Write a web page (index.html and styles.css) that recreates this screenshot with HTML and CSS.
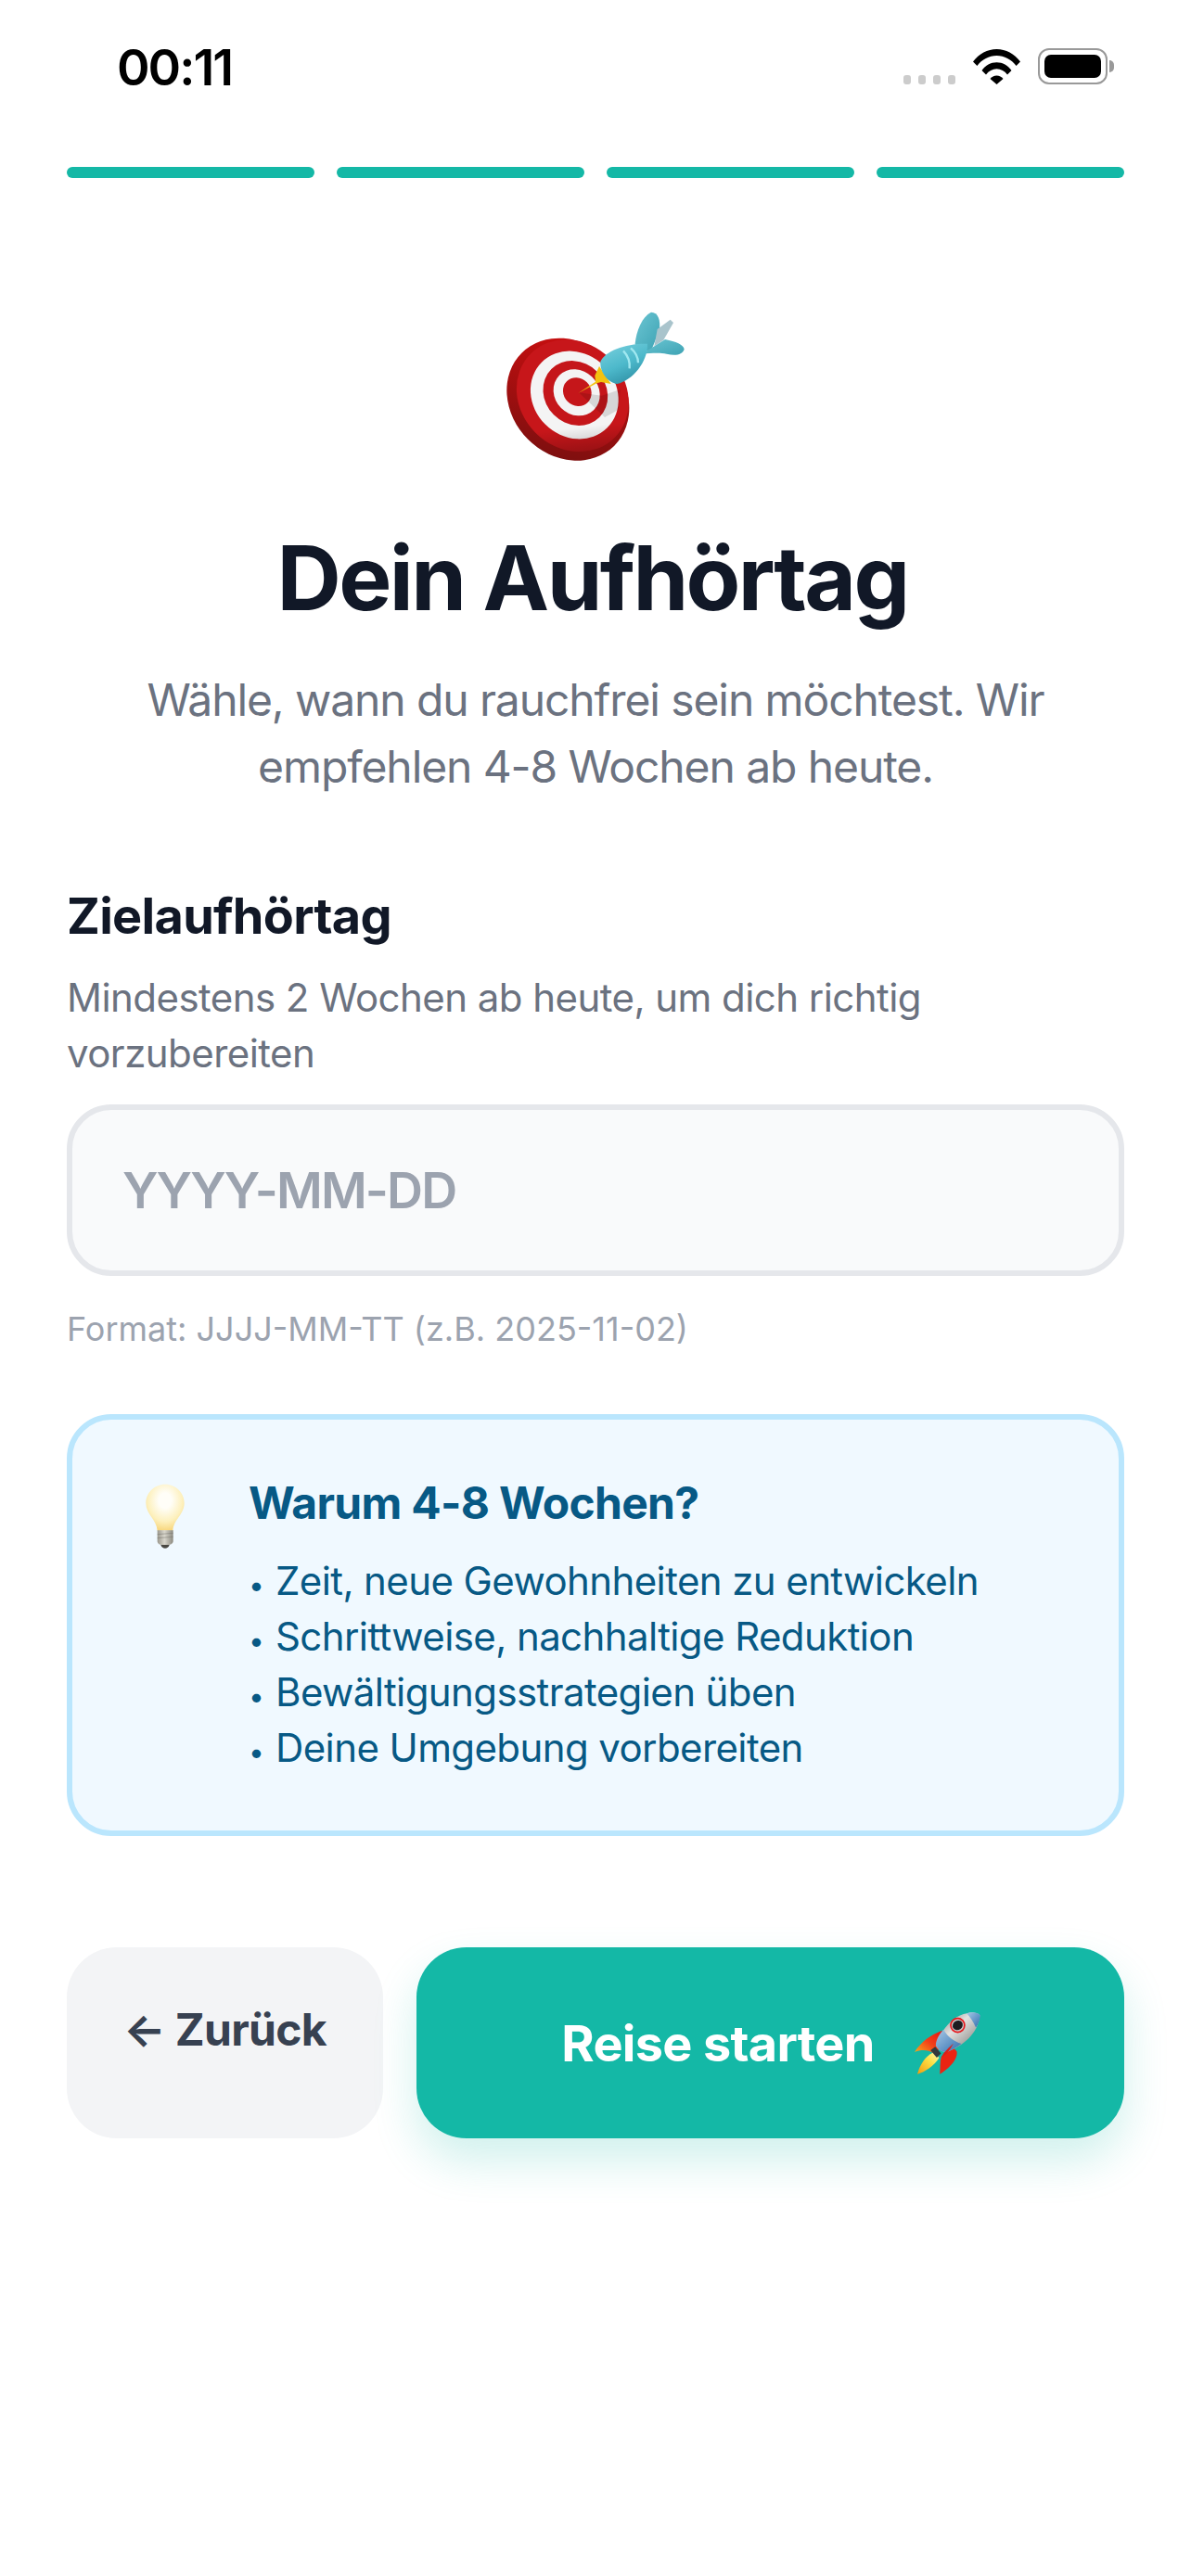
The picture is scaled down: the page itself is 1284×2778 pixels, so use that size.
FILE: index.html
```html
<!DOCTYPE html>
<html lang="de">
<head>
    <meta charset="UTF-8">
    <meta name="viewport" content="width=device-width, initial-scale=1.0">
    <title>Dein Aufhörtag</title>
    <link rel="stylesheet" href="styles.css">
</head>
<body>
    <!-- Statusleiste -->
    <div class="status-bar">
        <span class="time">00:11</span>
        <div class="status-icons">
            <div class="signal"><i></i><i></i><i></i><i></i></div>
            <svg class="wifi" viewBox="0 0 51 38" width="51" height="38">
                <path d="M0 13.5C6.5 5 15.5 0 25.5 0S44.5 5 51 13.5L46.6 18C41.2 11 33.8 7 25.5 7S9.8 11 4.4 18Z"/>
                <path d="M9.5 23C13.5 17.5 19 14.2 25.5 14.2S37.500 17.5 41.500 23L37 27.500C34 23.600 30 21.300 25.500 21.300S17 23.600 14 27.500Z"/>
                <path d="M18.500 32C20.200 29.800 22.700 28.400 25.500 28.400S30.800 29.800 32.500 32L25.500 38Z"/>
            </svg>
            <div class="battery"><div class="battery-level"></div></div>
        </div>
    </div>

    <!-- Fortschritt -->
    <div class="progress">
        <div class="progress-step"></div>
        <div class="progress-step"></div>
        <div class="progress-step"></div>
        <div class="progress-step"></div>
    </div>

    <main class="content">
        <svg class="target-icon" viewBox="0 0 840 600" width="280" height="200">
            <defs>
                <linearGradient id="finGrad" x1="0" y1="0" x2="1" y2="1">
                    <stop offset="0" stop-color="#6cc6d3"/>
                    <stop offset="1" stop-color="#3ea3b4"/>
                </linearGradient>
                <linearGradient id="bodyGrad" x1="0.3" y1="0.1" x2="0.7" y2="0.9">
                    <stop offset="0" stop-color="#6cc9d8"/>
                    <stop offset="0.5" stop-color="#4db9cb"/>
                    <stop offset="1" stop-color="#3395aa"/>
                </linearGradient>
                <linearGradient id="rimGrad" x1="0" y1="0" x2="0.7" y2="1">
                    <stop offset="0" stop-color="#d40f10"/>
                    <stop offset="1" stop-color="#7d0f0f"/>
                </linearGradient>
                <linearGradient id="shadeGrad" x1="0.3" y1="0.2" x2="1" y2="0.7">
                    <stop offset="0.72" stop-color="#000" stop-opacity="0"/>
                    <stop offset="1" stop-color="#000" stop-opacity="0.25"/>
                </linearGradient>
            </defs>
            <ellipse cx="331" cy="362" rx="212" ry="183" transform="rotate(45 331 362)" fill="url(#rimGrad)"/>
            <ellipse cx="346" cy="350" rx="192" ry="170" transform="rotate(45 346 350)" fill="#c7161a"/>
            <ellipse cx="352" cy="348" rx="150" ry="134" transform="rotate(45 352 348)" fill="#f4f4f4"/>
            <ellipse cx="355" cy="342" rx="110" ry="99" transform="rotate(45 355 342)" fill="#c5161a"/>
            <ellipse cx="359" cy="340" rx="79" ry="71" transform="rotate(45 359 340)" fill="#f4f4f4"/>
            <ellipse cx="361" cy="338" rx="48" ry="44" transform="rotate(45 361 338)" fill="#c5161a"/>
            <path d="M366 340L440 350L500 330L495 395L450 420Z" fill="#000" opacity="0.12"/>
            <ellipse cx="346" cy="350" rx="192" ry="170" transform="rotate(45 346 350)" fill="url(#shadeGrad)"/>
            <path d="M364 342L420 305L418 285L432 255L470 312L438 306L424 310Z" fill="#f3c20f"/>
            <path d="M548 182C552 140 570 95 600 80C622 80 632 105 626 140L600 205L560 205Z" fill="url(#finGrad)"/>
            <path d="M620 135L662 104L672 114L640 170L610 190Z" fill="#a9c4cc"/>
            <path d="M570 215L645 168C680 175 705 185 707 200C700 218 680 222 650 215C630 210 600 212 570 215Z" fill="url(#finGrad)"/>
            <path d="M436 240C450 205 520 180 588 182C590 240 540 300 490 312C460 308 434 275 436 240Z" fill="url(#bodyGrad)"/>
            <path d="M510 205C526 222 532 242 530 262M534 196C550 210 558 226 558 244" fill="none" stroke="#a0e8f0" stroke-width="7"/>
        </svg>

        <h1 class="title">Dein Aufhörtag</h1>
        <p class="subtitle">Wähle, wann du rauchfrei sein möchtest. Wir empfehlen 4-8 Wochen ab heute.</p>

        <label class="field-label" for="quitDate">Zielaufhörtag</label>
        <p class="field-help">Mindestens 2 Wochen ab heute, um dich richtig vorzubereiten</p>
        <input class="date-input" id="quitDate" type="text" placeholder="YYYY-MM-DD">
        <p class="field-format">Format: JJJJ-MM-TT (z.B. 2025-11-02)</p>

        <div class="info-box">
            <svg class="bulb-icon" viewBox="84 84 180 222" width="60" height="74">
                <defs>
                    <radialGradient id="glassGrad" cx="0.5" cy="0.35" r="0.65">
                        <stop offset="0.25" stop-color="#fffef8"/>
                        <stop offset="0.7" stop-color="#fdf0bc"/>
                        <stop offset="1" stop-color="#f8d77e"/>
                    </radialGradient>
                    <linearGradient id="baseGrad" x1="0" y1="0" x2="1" y2="0">
                        <stop offset="0" stop-color="#9a978c"/>
                        <stop offset="0.45" stop-color="#d8d6cc"/>
                        <stop offset="1" stop-color="#8c8a80"/>
                    </linearGradient>
                </defs>
                <path d="M174 92C139 92 112 120 112 153C112 190 146 205 149 242H199C202 205 236 190 236 153C236 120 209 92 174 92Z" fill="url(#glassGrad)"/>
                <path d="M149 241H200V276C200 284 190 288 186 288H162C157 288 149 284 149 276Z" fill="url(#baseGrad)"/>
                <path d="M149 254L200 250M149 266L200 262" stroke="#77756c" stroke-width="2.500" opacity="0.6"/>
                <path d="M160 288H188C186 296 180 299 174 299S162 296 160 288Z" fill="#4a4944"/>
            </svg>
            <div class="info-text">
                <h2 class="info-title">Warum 4-8 Wochen?</h2>
                <ul class="info-list">
                    <li>Zeit, neue Gewohnheiten zu entwickeln</li>
                    <li>Schrittweise, nachhaltige Reduktion</li>
                    <li>Bewältigungsstrategien üben</li>
                    <li>Deine Umgebung vorbereiten</li>
                </ul>
            </div>
        </div>

        <div class="actions">
            <button class="btn-back">← Zurück</button>
            <button class="btn-start">
                <span>Reise starten</span>
                <svg class="rocket-icon" viewBox="125 85 220 210" width="73" height="70">
                    <defs>
                        <linearGradient id="hullGrad" x1="0.1" y1="0.1" x2="0.9" y2="0.9">
                            <stop offset="0" stop-color="#8c8c8c"/>
                            <stop offset="0.4" stop-color="#e2e2e0"/>
                            <stop offset="0.75" stop-color="#a9a9a6"/>
                            <stop offset="1" stop-color="#6f7375"/>
                        </linearGradient>
                        <linearGradient id="noseGrad" x1="0" y1="0" x2="1" y2="1">
                            <stop offset="0" stop-color="#a9c9e6"/>
                            <stop offset="1" stop-color="#2f6fb0"/>
                        </linearGradient>
                        <linearGradient id="finRed" x1="0" y1="1" x2="1" y2="0">
                            <stop offset="0" stop-color="#f7b01c"/>
                            <stop offset="0.5" stop-color="#f2401a"/>
                            <stop offset="1" stop-color="#e8150f"/>
                        </linearGradient>
                        <linearGradient id="flameGrad" x1="0" y1="1" x2="1" y2="0">
                            <stop offset="0" stop-color="#f29a0c"/>
                            <stop offset="0.6" stop-color="#fde047"/>
                            <stop offset="1" stop-color="#fff7b0"/>
                        </linearGradient>
                    </defs>
                    <path d="M218 150C180 165 150 185 128 220C150 212 170 212 190 224L215 205Z" fill="url(#finRed)"/>
                    <path d="M265 218C270 240 245 270 210 292C212 270 210 250 215 235L245 195Z" fill="#ea2412"/>
                    <path d="M188 222C162 235 145 262 137 292C160 285 192 265 208 238Z" fill="url(#flameGrad)"/>
                    <path d="M180 214L195 203L214 225L200 238Z" fill="#33393d"/>
                    <path d="M298 94C255 100 215 145 197 198C205 212 215 220 232 220C285 200 335 160 340 100C330 90 312 90 298 94Z" fill="url(#hullGrad)"/>
                    <path d="M297 94C315 88 335 92 341 100C341 115 335 130 327 140C318 120 308 105 297 94Z" fill="url(#noseGrad)"/>
                    <path d="M222 147C205 165 197 185 197 198C205 212 215 220 232 220C248 214 265 205 280 193C255 185 235 170 222 147Z" fill="url(#noseGrad)"/>
                    <circle cx="268" cy="133" r="25" fill="#e8161a"/>
                    <circle cx="268" cy="133" r="20" fill="#c8c8c8"/>
                    <ellipse cx="268" cy="133" rx="17" ry="15" transform="rotate(-35 268 133)" fill="#1c1c20"/>
                    <path d="M222 225C232 212 245 200 254 192C248 205 235 225 215 238Z" fill="#d9201a"/>
                </svg>
            </button>
        </div>
    </main>
</body>
</html>
```

FILE: styles.css
```css
* {
    box-sizing: border-box;
}
body {
    font-family: Inter, "Liberation Sans", sans-serif;
    margin: 0;
    padding: 0;
    background-color: #fff;
    color: #111827;
    min-height: 2778px;
}
.status-bar {
    display: flex;
    justify-content: space-between;
    height: 180px;
    padding: 44px 90px 0 126px;
}
.time {
    font-size: 54px;
    font-weight: 600;
    line-height: 57px;
    letter-spacing: -2px;
    color: #000;
}
.status-icons {
    display: flex;
    align-items: flex-end;
    gap: 19px;
    height: 38px;
    margin-top: 9px;
}
.signal {
    display: flex;
    gap: 8px;
}
.signal i {
    width: 8px;
    height: 10px;
    border-radius: 3px;
    background-color: #ccc;
}
.wifi {
    fill: #000;
    display: block;
}
.battery {
    position: relative;
    width: 75px;
    height: 39px;
    padding: 5px;
    border: 2px solid #999;
    border-radius: 12px;
}
.battery::after {
    content: "";
    position: absolute;
    right: -9px;
    top: 11px;
    width: 5px;
    height: 13px;
    border-radius: 0 5px 5px 0;
    background-color: #999;
}
.battery-level {
    height: 100%;
    border-radius: 7px;
    background-color: #000;
}
.progress {
    display: flex;
    gap: 24px;
    padding: 0 72px;
}
.progress-step {
    flex: 1;
    height: 12px;
    border-radius: 6px;
    background-color: #14b8a6;
}
.content {
    display: flex;
    flex-direction: column;
    padding: 118px 72px 0;
}
.target-icon {
    display: block;
    align-self: center;
}
.title {
    margin: 55px 7px 0 0;
    font-size: 96px;
    font-weight: 700;
    line-height: 116px;
    letter-spacing: -2.6px;
    text-align: center;
}
.subtitle {
    margin: 38px 60px 0;
    font-size: 48px;
    line-height: 72px;
    letter-spacing: -1.1px;
    text-align: center;
    color: #6b7280;
}
.field-label {
    margin-top: 92px;
    font-size: 54px;
    font-weight: 700;
    line-height: 66px;
    letter-spacing: -0.7px;
}
.field-help {
    margin: 25px 0 0;
    font-size: 42px;
    line-height: 60px;
    letter-spacing: -0.55px;
    color: #6b7280;
}
.date-input {
    width: 100%;
    height: 185px;
    margin-top: 25px;
    padding: 0 54px;
    font-family: inherit;
    font-size: 54px;
    font-weight: 600;
    letter-spacing: -1.9px;
    color: #111827;
    background-color: #f9fafb;
    border: 6px solid #e5e7eb;
    border-radius: 48px;
}
.date-input::placeholder {
    color: #9ca3af;
    opacity: 1;
}
.field-format {
    margin: 35px 0 0;
    font-size: 36px;
    line-height: 44px;
    color: #9ca3af;
}
.info-box {
    display: flex;
    align-items: flex-start;
    gap: 60px;
    margin-top: 70px;
    padding: 61px 70px 59px;
    background-color: #f0f9ff;
    border: 6px solid #bae6fd;
    border-radius: 48px;
}
.bulb-icon {
    display: block;
    flex-shrink: 0;
    margin-top: 6px;
}
.info-title {
    margin: 0 0 25px;
    font-size: 48px;
    font-weight: 700;
    line-height: 58px;
    letter-spacing: -0.7px;
    color: #075985;
}
.info-list {
    margin: 0;
    padding: 0;
    list-style: none;
    font-size: 42px;
    line-height: 60px;
    letter-spacing: -0.6px;
    color: #075985;
}
.info-list li::before {
    content: "•";
    display: inline-block;
    width: 29px;
    font-size: 30px;
    line-height: 0;
}
.actions {
    display: flex;
    gap: 36px;
    margin-top: 120px;
}
.btn-back,
.btn-start {
    height: 206px;
    border: none;
    border-radius: 54px;
    font-family: inherit;
    font-weight: 700;
}
.btn-back {
    width: 341px;
    padding: 60px 0 0;
    display: flex;
    justify-content: center;
    font-size: 48px;
    line-height: 58px;
    letter-spacing: -0.7px;
    color: #374151;
    background-color: #f3f4f6;
}
.btn-start {
    flex: 1;
    display: flex;
    align-items: center;
    justify-content: center;
    gap: 42px;
    padding-right: 4px;
    font-size: 54px;
    letter-spacing: -0.7px;
    color: #fff;
    background-color: #14b8a6;
    box-shadow: 0 24px 48px rgba(20, 184, 166, 0.2);
}
.rocket-icon {
    display: block;
}
```
